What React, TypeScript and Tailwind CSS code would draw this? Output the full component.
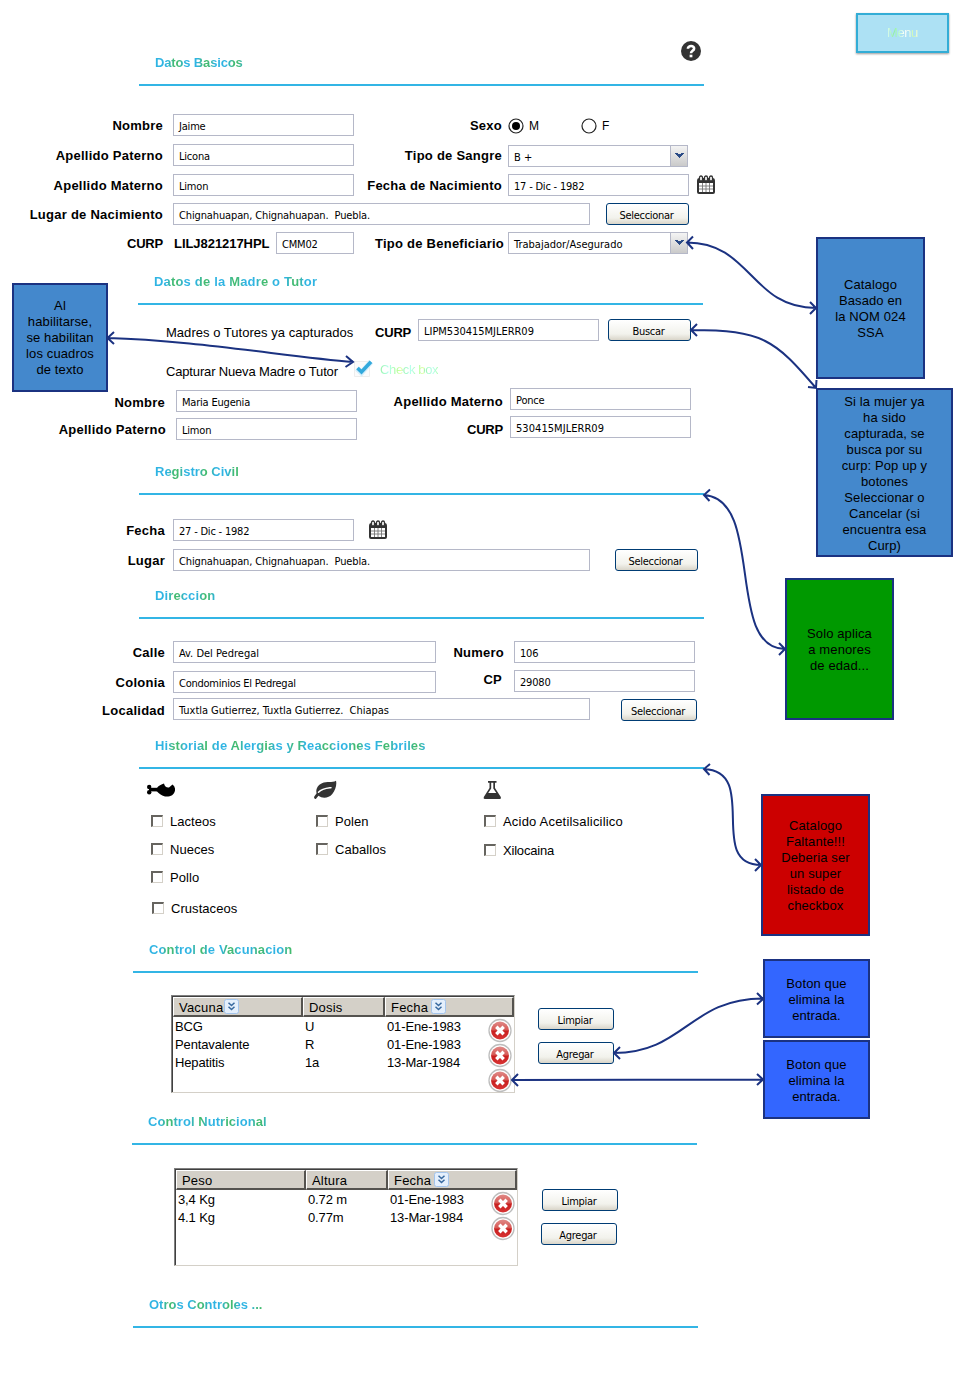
import type { ReactNode } from "react";

const label = "h-[22px] shrink-0 whitespace-nowrap text-right text-[13px] font-bold leading-[24px]";
const body = "h-[22px] whitespace-nowrap text-[13px] leading-[24px]";
const small = "font-['DejaVu_Sans_Condensed','DejaVu_Sans',sans-serif] font-[stretch:condensed] text-[11px]";

function Label({ className, track = "tracking-[0.25px]", children }: { className: string; track?: string; children: ReactNode }) {
  return <span className={`${label} ${track} ${className}`}>{children}</span>;
}

function Input({ className, value, track = "tracking-[-0.2px]" }: { className: string; value: string; track?: string }) {
  return (
    <div className={`h-[22px] shrink-0 whitespace-pre border border-[#b5b8c8] bg-white pl-[5px] leading-[23px] ${small} ${track} ${className}`}>
      {value}
    </div>
  );
}

function Select({ className, value }: { className: string; value: string }) {
  return (
    <div className={`flex h-[22px] w-[180px] shrink-0 border border-[#b5b8c8] bg-white ${className}`}>
      <span className={`h-5 grow pl-[5px] leading-[23px] tracking-[0px] ${small}`}>{value}</span>
      <span className="flex h-5 w-[17px] justify-center border-l border-[#b5b8c8] bg-linear-to-b from-[#f4f4f4] to-[#cacaca] pt-[6px]">
        <svg width="9" height="7" viewBox="0 0 9 7" shapeRendering="crispEdges">
          <path d="M0 1h3v1h3V1h3v1H8v1H7v1H6v1H5v1H4V5H3V4H2V3H1V2H0z" fill="#2b4b86" />
        </svg>
      </span>
    </div>
  );
}

function Button({ className, children }: { className: string; children: ReactNode }) {
  return (
    <button
      className={`h-[22px] shrink-0 rounded-[3px] border border-[#003c74] bg-linear-to-b from-white via-[#f2f2ec] via-70% to-[#d9d5c9] pt-[3px] pr-[2px] text-center leading-[17px] tracking-[-0.3px] ${small} ${className}`}
    >
      {children}
    </button>
  );
}

function Heading({ className, track = "tracking-[0.12px]", children }: { className: string; track?: string; children: ReactNode }) {
  return (
    <h2 className={`h-8 w-[565px] border-b-2 border-[#33b5e5] pt-px pl-4 text-[13px] leading-4 font-bold ${track} ${className}`}>
      <span className="bg-[repeating-linear-gradient(90deg,#2fb4e3_0px,#2fb4e3_12px,#43bb70_19px,#43bb70_23px,#2fb4e3_30px)] bg-clip-text whitespace-nowrap text-transparent">
        {children}
      </span>
    </h2>
  );
}

function Calendar({ className }: { className: string }) {
  return (
    <svg className={`shrink-0 ${className}`} width="20" height="20" viewBox="0 0 20 20">
      <path d="M1 5.500Q1 3 3 3h14q2 0 2 2.500V17q0 2-2 2H3q-2 0-2-2z" fill="#333" />
      <path d="M3 8h14v9H3z" fill="#fff" />
      <path d="M6.500 8v9M10 8v9M13.500 8v9M3 11h14M3 14h14" stroke="#777" strokeWidth="0.900" />
      <g fill="#fff" stroke="#333" strokeWidth="1.300">
        <rect x="3.500" y="1" width="3" height="5" rx="1.500" />
        <rect x="8.500" y="1" width="3" height="5" rx="1.500" />
        <rect x="13.500" y="1" width="3" height="5" rx="1.500" />
      </g>
    </svg>
  );
}

function Radio({ checked, className }: { checked?: boolean; className: string }) {
  return (
    <svg className={`shrink-0 ${className}`} width="16" height="16" viewBox="0 0 16 16">
      <circle cx="8" cy="8" r="7" fill="#fff" stroke="#222" strokeWidth="1.200" />
      {checked && <circle cx="8" cy="8" r="4" fill="#000" />}
    </svg>
  );
}

function Check({ className, track = "tracking-[0.05px]", children }: { className?: string; track?: string; children: ReactNode }) {
  return (
    <div className={`flex h-[22px] items-center ${className ?? ""}`}>
      <span className="mr-[7px] size-3 shrink-0 border-t-2 border-r border-b border-l-2 border-t-[#66645f] border-r-[#d4d0c8] border-b-[#d4d0c8] border-l-[#66645f] bg-white" />
      <span className={`${body} ${track}`}>{children}</span>
    </div>
  );
}

function SortIcon({ className }: { className: string }) {
  return (
    <svg className={`mt-px shrink-0 ${className}`} width="15" height="15" viewBox="0 0 15 15">
      <rect x="0.500" y="0.500" width="14" height="14" rx="2" fill="#e4effc" stroke="#a3c4ec" />
      <path d="M4.500 3.700 7.500 6.500l3-2.800M4.500 7.700l3 2.800 3-2.800" fill="none" stroke="#38699f" strokeWidth="1.500" />
    </svg>
  );
}

function DeleteIcon() {
  return (
    <svg className="block shrink-0" width="24" height="25" viewBox="0 0 24 25">
      <defs>
        <linearGradient id="red" x1="0" y1="0" x2="0" y2="1">
          <stop offset="0" stopColor="#e08a88" />
          <stop offset="0.480" stopColor="#d65753" />
          <stop offset="0.520" stopColor="#c81e1e" />
          <stop offset="1" stopColor="#d83434" />
        </linearGradient>
      </defs>
      <circle cx="12" cy="12.500" r="11" fill="#fff" stroke="#bdbdbd" strokeWidth="1.300" />
      <circle cx="12" cy="12.500" r="9" fill="url(#red)" />
      <path d="m8.300 8.800 7.400 7.400m0-7.400-7.400 7.400" stroke="#fff" strokeWidth="3.400" />
    </svg>
  );
}

type Column = { title: string; sort?: boolean; gap?: string; width: string };

function Table({ columns, rows, deletes, className }: { columns: Column[]; rows: string[][]; deletes: number; className: string }) {
  return (
    <div
      className={`relative h-[98px] w-[344px] shrink-0 border-t border-r border-b border-l border-t-[#808080] border-r-[#d4d0c8] border-b-[#d4d0c8] border-l-[#808080] bg-white ${className}`}
    >
      <div className="h-full border-t border-l border-[#404040]">
        <div className="flex h-[20px]">
          {columns.map((c) => (
            <div
              key={c.title}
              className={`flex border-t border-r-2 border-b-2 border-l border-t-white border-r-[#55534f] border-b-[#55534f] border-l-white bg-[#d4d0c8] pl-[5px] text-[13px] leading-[19px] tracking-[0.2px] ${c.width}`}
            >
              {c.title}
              {c.sort && <SortIcon className={c.gap ?? ""} />}
            </div>
          ))}
        </div>
        {rows.map((r) => (
          <div key={r[0]} className="flex h-[18px] text-[13px] leading-[20px] tracking-[-0.13px]">
            {r.map((cell, i) => (
              <span key={i} className={`pl-[2px] whitespace-nowrap ${columns[i].width}`}>
                {cell}
              </span>
            ))}
          </div>
        ))}
      </div>
      <div className="absolute top-[22px] right-[2px]">
        {Array.from({ length: deletes }, (_, i) => (
          <DeleteIcon key={i} />
        ))}
      </div>
    </div>
  );
}

function Note({ className, lines }: { className: string; lines: string[] }) {
  return (
    <div className={`absolute flex flex-col items-center justify-center border-2 border-[#1b3281] text-[13px] leading-4 tracking-[0.12px] ${className}`}>
      {lines.map((l) => (
        <span key={l} className="whitespace-nowrap">
          {l}
        </span>
      ))}
    </div>
  );
}

function Arrows() {
  return (
    <svg className="pointer-events-none absolute top-0 left-0" width="960" height="1400" viewBox="0 0 960 1400" fill="none" stroke="#1b3281" strokeWidth="2">
      <path d="M108 338C190 340 290 357 353 362M114 332l-6.500 6 6.500 6M346 356l7 6-7.500 5" />
      <path d="M687 242.500C751 242.500 751 308 816 308M693 236.500l-6 6 6 6.500M810 302l6 6-6 6" />
      <path d="M691 330C763 330 775 340 816 388M697 324l-6 6 6 6M808 387l8 1 .5-8" />
      <path d="M704 495C765 499 725 649 785 649M710 489.500l-6 5.500 5.500 6M779 643l6 6-6 6" />
      <path d="M704 769C760 771 706 865 761 865M710 764l-6 5 5.500 6M755 859l6 6-6 6" />
      <path d="M614 1053C684 1053 690 998.500 763 998.500M620 1047l-6 6 6 6M757 993l6 6-6 5.500" />
      <path d="M512 1080L763 1079.500M518 1074l-6 6 6 6M757 1074l6 5.500-6 5.500" />
    </svg>
  );
}

export default function App() {
  return (
    <div className="relative h-[1400px] w-[960px] overflow-hidden bg-white font-['Liberation_Sans',Arial,sans-serif] text-black">
      <header className="flex h-[54px] items-start">
        <svg className="mt-[41px] ml-[681px] shrink-0" width="20" height="20" viewBox="0 0 20 20">
          <circle cx="10" cy="10" r="10" fill="#333" />
          <path d="M6.900 7.800C6.900 4 13.400 4.200 13.100 7.600 13 9.800 10 9.900 10 12.200" fill="none" stroke="#fff" strokeWidth="2.600" />
          <path d="M8.600 13.700h2.800v2.600H8.600z" fill="#fff" />
        </svg>
        <button className="mt-[13px] ml-[155px] h-10 w-[93px] shrink-0 border-2 border-[#33add6] bg-[#ade1f4] text-[13px] tracking-[-0.4px] shadow-[0_1px_2px_rgba(0,0,0,0.4)]">
          <span className="bg-[linear-gradient(90deg,#e8fff8_0%,#8df09a_22%,#c8ffd8_42%,#ffffff_55%,#f4fff4_70%,#c8f8b0_85%,#ffffd8_100%)] bg-clip-text text-transparent">
            Menu
          </span>
        </button>
      </header>

      <section>
        <Heading className="ml-[139px]" track="tracking-[-0.15px]">Datos Basicos</Heading>
        <div className="flex h-[50px] pt-7">
          <Label className="w-[163px]">Nombre</Label>
          <Input className="ml-[10px] w-[181px]" value="Jaime" />
          <Label className="w-[148px]">Sexo</Label>
          <Radio checked className="mt-1 ml-[6px]" />
          <span className="ml-[5px] w-[52px] text-[12px] leading-[24px]">M</span>
          <Radio className="mt-1" />
          <span className="ml-[5px] text-[12px] leading-[24px]">F</span>
        </div>
        <div className="mt-2 flex h-[22px]">
          <Label className="w-[163px]">Apellido Paterno</Label>
          <Input className="ml-[10px] w-[181px]" value="Licona" />
          <Label className="w-[148px]">Tipo de Sangre</Label>
          <Select className="mt-px ml-[6px]" value="B +" />
        </div>
        <div className="mt-2 flex h-[22px]">
          <Label className="w-[163px]">Apellido Materno</Label>
          <Input className="ml-[10px] w-[181px]" value="Limon" />
          <Label className="w-[148px]">Fecha de Nacimiento</Label>
          <Input className="ml-[6px] w-[181px]" value="17 - Dic - 1982" />
          <Calendar className="mt-px ml-[7px]" />
        </div>
        <div className="mt-[7px] flex">
          <Label className="w-[163px]">Lugar de Nacimiento</Label>
          <Input className="ml-[10px] w-[417px]" track="tracking-[-0.13px]" value="Chignahuapan, Chignahuapan.  Puebla." />
          <Button className="ml-4 w-[83px]">Seleccionar</Button>
        </div>
        <div className="mt-[7px] flex">
          <Label className="w-[163px]" track="tracking-[-0.2px]">CURP</Label>
          <Label className="ml-[11px] w-[95px] text-left" track="tracking-[-0.05px]">LILJ821217HPL</Label>
          <Input className="ml-[7px] w-[78px]" value="CMM02" />
          <Label className="w-[150px]">Tipo de Beneficiario</Label>
          <Select className="ml-1" value="Trabajador/Asegurado" />
        </div>
      </section>

      <section className="pt-[19px]">
        <Heading className="ml-[138px]" track="tracking-[0.18px]">Datos de la Madre o Tutor</Heading>
        <div className="mt-[14px] ml-[166px] flex">
          <span className={`w-[209px] pt-[2px] tracking-[0.03px] ${body}`}>Madres o Tutores ya capturados</span>
          <Label className="w-[36px] pt-[2px]" track="tracking-[-0.2px]">CURP</Label>
          <Input className="ml-[7px] w-[181px]" track="tracking-[-0.02px]" value="LIPM530415MJLERR09" />
          <Button className="ml-[9px] w-[83px]">Buscar</Button>
        </div>
        <div className="mt-[19px] ml-[166px] flex h-[22px]">
          <span className={`w-[187px] tracking-[-0.16px] ${body}`}>Capturar Nueva Madre o Tutor</span>
          <svg className="-mt-px shrink-0" width="22" height="20" viewBox="0 0 22 20">
            <path d="M1.500 2.500h15v15h-15z" fill="#fbfbfb" stroke="#ededed" />
            <path d="m4 9.500 4.500 4.200 9.500-11" fill="none" stroke="#d6eefa" strokeWidth="5.500" />
            <path d="m4.500 9 4 4L18 2.700" fill="none" stroke="#33a9dc" strokeWidth="3.600" />
          </svg>
          <span className="ml-[5px] h-[19px] bg-[repeating-linear-gradient(90deg,#98f5a8_0px,#b8fff0_9px,#a8ff98_16px,#ecffb0_22px)] bg-clip-text text-[13px] leading-[19px] tracking-[-0.35px] whitespace-nowrap text-transparent">
            Check box
          </span>
        </div>
        <div className="mt-[6px] flex h-6">
          <Label className="w-[165px] pt-[3px]">Nombre</Label>
          <Input className="mt-[2px] ml-[11px] w-[181px]" value="Maria Eugenia" />
          <Label className="w-[146px] pt-[2px]">Apellido Materno</Label>
          <Input className="ml-[7px] w-[181px]" value="Ponce" />
        </div>
        <div className="mt-1 flex h-6">
          <Label className="w-[166px] pt-[2px]">Apellido Paterno</Label>
          <Input className="mt-[2px] ml-[10px] w-[181px]" value="Limon" />
          <Label className="w-[146px] pt-[2px]" track="tracking-[-0.2px]">CURP</Label>
          <Input className="ml-[7px] w-[181px]" track="tracking-[0.05px]" value="530415MJLERR09" />
        </div>
      </section>

      <section className="pt-[23px]">
        <Heading className="ml-[139px]" track="tracking-[0px]">Registro Civil</Heading>
        <div className="mt-6 flex h-[22px]">
          <Label className="w-[165px]">Fecha</Label>
          <Input className="ml-2 w-[181px]" value="27 - Dic - 1982" />
          <Calendar className="mt-px ml-[14px]" />
        </div>
        <div className="mt-2 flex">
          <Label className="w-[165px]">Lugar</Label>
          <Input className="ml-2 w-[417px]" track="tracking-[-0.13px]" value="Chignahuapan, Chignahuapan.  Puebla." />
          <Button className="ml-[25px] w-[83px]">Seleccionar</Button>
        </div>
      </section>

      <section className="pt-4">
        <Heading className="ml-[139px]">Direccion</Heading>
        <div className="mt-[22px] flex">
          <Label className="w-[165px]">Calle</Label>
          <Input className="ml-2 w-[263px]" track="tracking-[0px]" value="Av. Del Pedregal" />
          <Label className="w-[68px]">Numero</Label>
          <Input className="ml-[10px] w-[181px]" value="106" />
        </div>
        <div className="mt-[7px] flex h-[23px]">
          <Label className="w-[165px] pt-px">Colonia</Label>
          <Input className="mt-px ml-2 w-[263px]" track="tracking-[-0.25px]" value="Condominios El Pedregal" />
          <Label className="-mt-[2px] w-[66px]">CP</Label>
          <Input className="ml-3 w-[181px]" value="29080" />
        </div>
        <div className="mt-[5px] flex h-[22px]">
          <Label className="w-[165px] pt-px">Localidad</Label>
          <Input className="ml-2 w-[417px]" track="tracking-[-0.03px]" value="Tuxtla Gutierrez, Tuxtla Gutierrez.  Chiapas" />
          <Button className="mt-px ml-[31px] w-[76px]">Seleccionar</Button>
        </div>
      </section>

      <section className="pt-[17px]">
        <Heading className="ml-[139px]">Historial de Alergias y Reacciones Febriles</Heading>
        <div className="flex h-[172px] pt-[11px]">
          <div className="ml-[147px] w-[167px]">
            <svg className="block" width="28" height="20" viewBox="0 0 28 20">
              <circle cx="2.200" cy="7" r="2.200" />
              <circle cx="2.200" cy="12.300" r="2.200" />
              <path d="M2 7.800h8v3.600H2z" />
              <path d="M9.500 8.500C11.500 5.500 14.500 4.500 17 3.500Q18 8 22 7.500L25.500 4.500Q28.500 6.500 28 10.500C27 15.500 23 17 18 16.500 14 15.500 12 13.500 9.500 11z" />
            </svg>
            <div className="ml-1 pt-[10px]">
              <Check>Lacteos</Check>
              <Check className="mt-[6px]">Nueces</Check>
              <Check className="mt-[6px]">Pollo</Check>
              <Check className="mt-[9px] ml-px">Crustaceos</Check>
            </div>
          </div>
          <div className="w-[169px]">
            <svg className="block" width="23" height="20" viewBox="0 0 23 20">
              <path d="M22 .8C18 3 13 1.200 8 3.200 3 5.500 1.600 10 2.600 13.300L.3 16.500q-.7 1.800.8 2.500 1 .2 1.500-1L4.500 15.800C8 18.500 14.500 18.600 18.300 14 21.500 10 23 4.500 22 .8" fill="#333" />
              <path d="M4.500 12.300C8 8.500 12 8.300 17 7.700" fill="none" stroke="#fff" strokeWidth="1.500" strokeLinecap="round" />
            </svg>
            <div className="ml-[2px] pt-[10px]">
              <Check>Polen</Check>
              <Check className="mt-[6px]">Caballos</Check>
            </div>
          </div>
          <div>
            <svg className="block" width="19" height="20" viewBox="0 0 19 20">
              <path d="M5 1h8.500v1.800H12V8l5.800 9q.8 2-1 2H1.800q-1.700 0-1-2L6.500 8V2.800H5zM8.200 2.800v5.700L5.200 13h8.100l-3-4.500V2.800z" fill="#333" fillRule="evenodd" />
            </svg>
            <div className="ml-px pt-[10px]">
              <Check track="tracking-[0.2px]">Acido Acetilsalicilico</Check>
              <Check className="mt-[7px]" track="tracking-[-0.2px]">Xilocaina</Check>
            </div>
          </div>
        </div>
      </section>

      <section>
        <Heading className="ml-[133px]">Control de Vacunacion</Heading>
        <div className="mt-[22px] flex">
          <Table
            className="ml-[171px]"
            columns={[
              { title: "Vacuna", sort: true, gap: "ml-px", width: "w-[130px]" },
              { title: "Dosis", width: "w-[82px]" },
              { title: "Fecha", sort: true, gap: "ml-[3px]", width: "w-[129px]" },
            ]}
            rows={[
              ["BCG", "U", "01-Ene-1983"],
              ["Pentavalente", "R", "01-Ene-1983"],
              ["Hepatitis", "1a", "13-Mar-1984"],
            ]}
            deletes={3}
          />
          <div className="ml-[23px] flex flex-col gap-3 pt-[13px]">
            <Button className="w-[76px]">Limpiar</Button>
            <Button className="w-[76px]">Agregar</Button>
          </div>
        </div>
      </section>

      <section className="pt-5">
        <Heading className="ml-[132px]" track="tracking-[0.05px]">Control Nutricional</Heading>
        <div className="mt-[23px] flex">
          <Table
            className="ml-[174px]"
            columns={[
              { title: "Peso", width: "w-[130px]" },
              { title: "Altura", width: "w-[82px]" },
              { title: "Fecha", sort: true, gap: "ml-[3px]", width: "w-[129px]" },
            ]}
            rows={[
              ["3,4 Kg", "0.72 m", "01-Ene-1983"],
              ["4.1 Kg", "0.77m", "13-Mar-1984"],
            ]}
            deletes={2}
          />
          <div className="ml-[23px] flex flex-col gap-3 pt-[21px]">
            <Button className="ml-px w-[76px]">Limpiar</Button>
            <Button className="w-[76px]">Agregar</Button>
          </div>
        </div>
      </section>

      <section className="pt-[30px]">
        <Heading className="ml-[133px]" track="tracking-[0px]">Otros Controles ...</Heading>
      </section>

      <Note className="top-[283px] left-[12px] h-[109px] w-[96px] bg-[#4488cc]" lines={["Al", "habilitarse,", "se habilitan", "los cuadros", "de texto"]} />
      <Note className="top-[237px] left-[816px] h-[142px] w-[109px] bg-[#4488cc] pt-px" lines={["Catalogo", "Basado en", "la NOM 024", "SSA"]} />
      <Note
        className="top-[388px] left-[816px] h-[169px] w-[137px] bg-[#4488cc] pt-[2px]"
        lines={["Si la mujer ya", "ha sido", "capturada, se", "busca por su", "curp: Pop up y", "botones", "Seleccionar o", "Cancelar (si", "encuentra esa", "Curp)"]}
      />
      <Note className="top-[578px] left-[785px] h-[142px] w-[109px] bg-[#009900] pt-[2px]" lines={["Solo aplica", "a menores", "de edad..."]} />
      <Note className="top-[794px] left-[761px] h-[142px] w-[109px] bg-[#cc0000] pt-[2px]" lines={["Catalogo", "Faltante!!!", "Deberia ser", "un super", "listado de", "checkbox"]} />
      <Note className="top-[959px] left-[763px] h-[79px] w-[107px] bg-[#3366ff] pt-[2px]" lines={["Boton que", "elimina la", "entrada."]} />
      <Note className="top-[1040px] left-[763px] h-[79px] w-[107px] bg-[#3366ff] pt-[2px]" lines={["Boton que", "elimina la", "entrada."]} />
      <Arrows />
    </div>
  );
}
